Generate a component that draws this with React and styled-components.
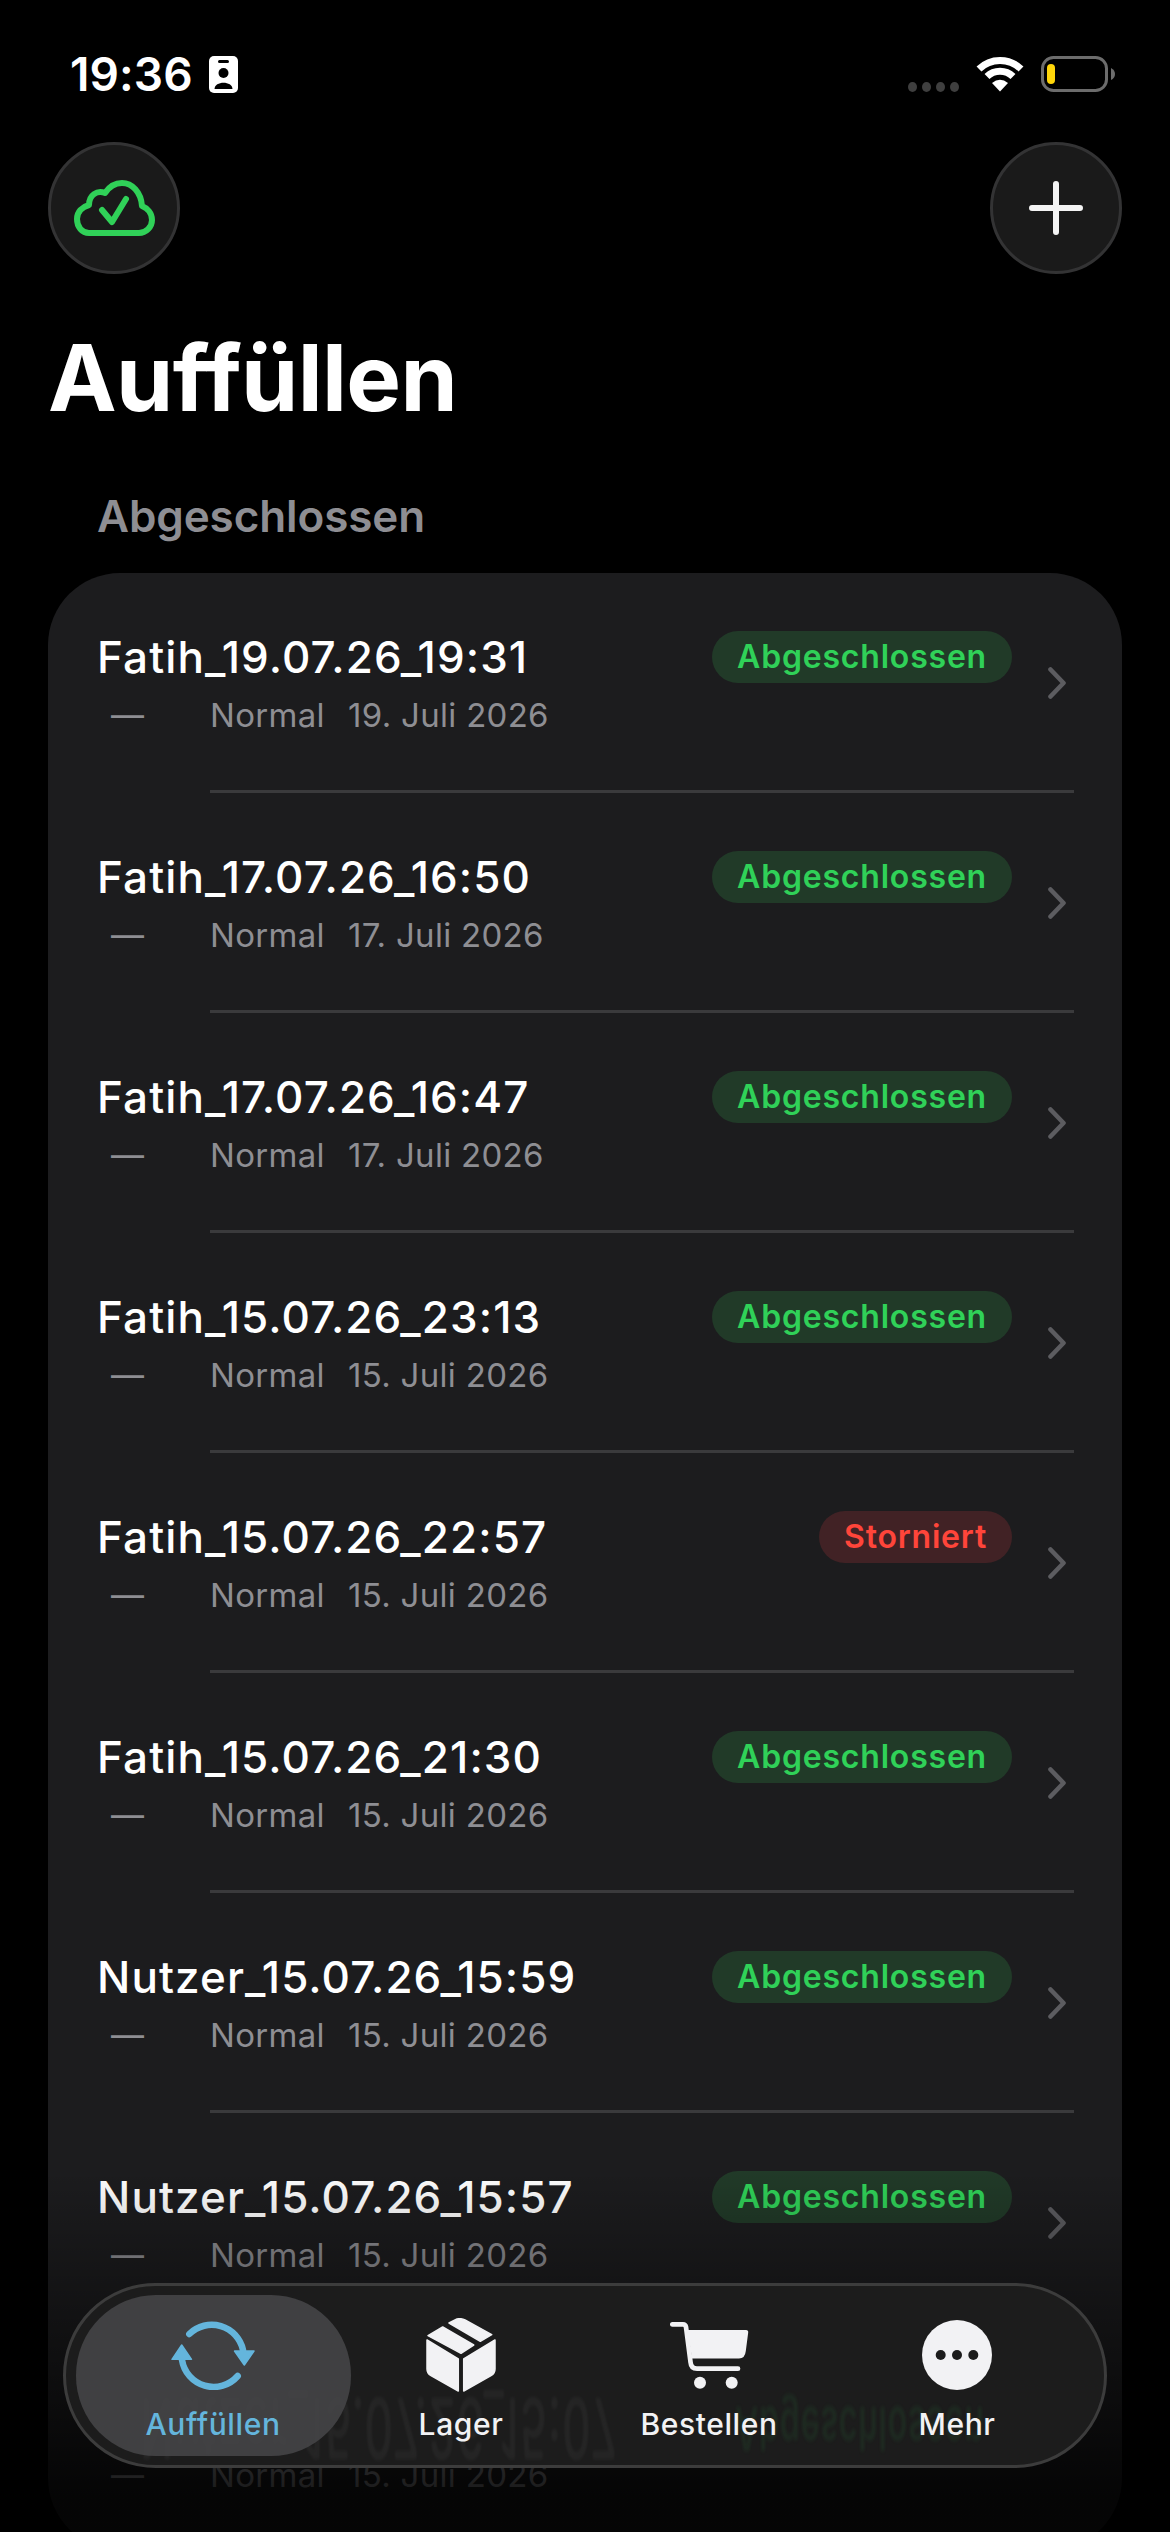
import React from "react";
import styled, { createGlobalStyle } from "styled-components";

const Global = createGlobalStyle`
  html, body { margin: 0; padding: 0; background: #000; }
  * { box-sizing: border-box; }
`;

const Screen = styled.div`
  position: relative;
  width: 1170px;
  height: 2532px;
  overflow: hidden;
  background: #000;
  color: #fff;
  font-family: Inter, "Noto Sans", sans-serif;
`;

const StatusBar = styled.header`
  display: flex;
  justify-content: space-between;
  align-items: flex-start;
  height: 142px;
  padding: 0 54px 0 70px;
`;
const StatusLeft = styled.div`
  display: flex;
  align-items: flex-start;
  gap: 16px;
  padding-top: 51px;
`;
const Time = styled.span`
  font-size: 46px;
  line-height: 46px;
  font-weight: 600;
  letter-spacing: 0.1px;
`;
const IdIcon = styled.svg`
  margin-top: 5px;
`;
const StatusRight = styled.div`
  display: flex;
  align-items: flex-start;
  gap: 17px;
  padding-top: 56px;
`;
const Dots = styled.div`
  display: flex;
  gap: 5px;
  margin-top: 26px;
`;
const Dot = styled.i`
  width: 9px;
  height: 10px;
  border-radius: 50%;
  background: #3f3f3f;
`;

const TopBar = styled.div`
  display: flex;
  justify-content: space-between;
  padding: 0 48px;
`;
const RoundButton = styled.button`
  display: flex;
  align-items: center;
  justify-content: center;
  width: 132px;
  height: 132px;
  padding: 0;
  border-radius: 50%;
  border: 3px solid #333334;
  background: #1a1a1a;
`;

const PageTitle = styled.h1`
  margin: 54px 0 0 48px;
  font-size: 92px;
  line-height: 100px;
  font-weight: 700;
  letter-spacing: -0.6px;
`;
const SectionLabel = styled.h2`
  margin: 62px 0 31px 97px;
  font-size: 44px;
  line-height: 52px;
  font-weight: 600;
  letter-spacing: -0.1px;
  color: #8e8e93;
`;

const Card = styled.section`
  margin: 0 48px;
  border-radius: 72px;
  background: #1c1c1e;
`;
const Row = styled.div`
  display: flex;
  align-items: flex-start;
  padding: 58px 56px 55px 49px;
`;
const Main = styled.div`
  flex: 1;
  min-width: 0;
`;
const RowTitle = styled.div`
  font-size: 44px;
  line-height: 52px;
  font-weight: 500;
  letter-spacing: 1.1px;
`;
const SubLine = styled.div`
  display: flex;
  margin-top: 13px;
  font-size: 33px;
  line-height: 39px;
  letter-spacing: 0.3px;
  color: #8e8e93;
`;
const DashSlot = styled.span`
  width: 113px;
  padding-left: 14px;
`;
const Priority = styled.span`
  width: 138px;
`;
const Badge = styled.span`
  padding: 0 25px;
  height: 52px;
  border-radius: 26px;
  font-size: 32px;
  line-height: 52px;
  font-weight: 600;
  letter-spacing: 0.8px;
  color: ${p => (p.$cancelled ? "#ff453a" : "#30d158")};
  background: ${p => (p.$cancelled ? "#412225" : "#213a28")};
`;
const Chevron = styled.svg`
  align-self: center;
  margin-left: 36px;
`;
const Divider = styled.div`
  height: 3px;
  margin: 0 48px 0 162px;
  background: #3a3a3c;
`;

const Fade = styled.div`
  position: absolute;
  left: 0;
  right: 0;
  top: 2170px;
  bottom: 0;
  pointer-events: none;
  background: linear-gradient(to bottom, rgba(0,0,0,0), rgba(0,0,0,0.82) 90%, rgba(0,0,0,0.82));
`;

const TabBar = styled.nav`
  position: absolute;
  left: 63px;
  bottom: 64px;
  display: flex;
  width: 1044px;
  height: 185px;
  padding: 9px 23px;
  overflow: hidden;
  border-radius: 93px;
  border: 3px solid #3c3c3c;
  background: #1c1c1c;
`;
const Mirror = styled.span`
  position: absolute;
  top: 127px;
  left: ${p => p.$left}px;
  font-size: ${p => p.$size}px;
  line-height: 30px;
  font-weight: ${p => p.$weight};
  letter-spacing: ${p => p.$spacing}px;
  white-space: nowrap;
  color: ${p => p.$color};
  transform: scaleY(-1.9);
  filter: blur(1px);
`;
const Tab = styled.a`
  position: relative;
  flex: 0 0 248px;
  display: flex;
  flex-direction: column;
  align-items: center;
  height: 161px;
  padding-top: 23px;
  color: ${p => (p.$active ? "#64b5dc" : "#f2f2f4")};
  &::before {
    content: "";
    display: ${p => (p.$active ? "block" : "none")};
    position: absolute;
    top: 0;
    bottom: 0;
    left: -13px;
    right: -14px;
    border-radius: 80px;
    background: rgba(72, 72, 74, 0.82);
  }
`;
const TabIcon = styled.svg`
  position: relative;
  display: block;
`;
const TabIconSlot = styled.div`
  display: flex;
  align-items: center;
  justify-content: center;
  height: 74px;
`;
const TabLabel = styled.span`
  position: relative;
  margin-top: 14px;
  font-size: 30px;
  line-height: 36px;
  font-weight: 500;
  letter-spacing: 0.6px;
`;

const rows = [
  ["Fatih_19.07.26_19:31", "19. Juli 2026", false],
  ["Fatih_17.07.26_16:50", "17. Juli 2026", false],
  ["Fatih_17.07.26_16:47", "17. Juli 2026", false],
  ["Fatih_15.07.26_23:13", "15. Juli 2026", false],
  ["Fatih_15.07.26_22:57", "15. Juli 2026", true],
  ["Fatih_15.07.26_21:30", "15. Juli 2026", false],
  ["Nutzer_15.07.26_15:59", "15. Juli 2026", false],
  ["Nutzer_15.07.26_15:57", "15. Juli 2026", false],
  ["Nutzer_15.07.26_15:07", "15. Juli 2026", false],
];

const ChevronIcon = () => (
  <Chevron width="18" height="32" viewBox="0 0 18 32" fill="none">
    <path d="M2.5 2.5 L15.5 16 L2.5 29.5" stroke="#5c5c60" strokeWidth="4.6" strokeLinecap="round" strokeLinejoin="round" />
  </Chevron>
);

export default function App() {
  return (
    <Screen>
      <Global />
      <StatusBar>
        <StatusLeft>
          <Time>19:36</Time>
          <IdIcon width="29" height="37" viewBox="0 0 29 37">
            <rect width="29" height="37" rx="5" fill="#fff" />
            <rect x="9" y="4" width="11" height="3" rx="1.5" fill="#000" />
            <circle cx="14.5" cy="17" r="5" fill="#000" />
            <path d="M5.5 33 C5.5 24.5 23.5 24.5 23.5 33 Z" fill="#000" />
          </IdIcon>
        </StatusLeft>
        <StatusRight>
          <Dots><Dot /><Dot /><Dot /><Dot /></Dots>
          <svg width="48" height="36" viewBox="0 0 48 36" fill="none">
            <path d="M3 13 A30 30 0 0 1 45 13" stroke="#fff" strokeWidth="7" />
            <path d="M11 20.5 A18.5 18.5 0 0 1 37 20.5" stroke="#fff" strokeWidth="7" />
            <path d="M16 27 Q24 20.5 32 27 L24 35.5 Z" fill="#fff" />
          </svg>
          <svg width="75" height="36" viewBox="0 0 75 36" fill="none">
            <rect x="1.5" y="1.5" width="64" height="33" rx="11" stroke="#6c6c6c" strokeWidth="3" />
            <rect x="6" y="8" width="8" height="20" rx="4" fill="#ffd60a" />
            <path d="M70 12 Q74 14 74 18 Q74 22 70 24 Z" fill="#6c6c6c" />
          </svg>
        </StatusRight>
      </StatusBar>

      <TopBar>
        <RoundButton aria-label="Sync">
          <svg width="81" height="56" viewBox="0 0 81 56" fill="none" stroke="#30d158" strokeWidth="6" strokeLinecap="round" strokeLinejoin="round">
            <path d="M15 53 H65 C72 53 78 47 78 40 C78 33 73 28 68 26 C67 12 58 3 48 3 C41 3 35 7 31 13 C23 10 15 15 15 25 C8 27 3 32 3 39 C3 47 8 53 15 53 Z" />
            <path d="M28 30 L38 42 L52 19" />
          </svg>
        </RoundButton>
        <RoundButton aria-label="Neu">
          <svg width="54" height="54" viewBox="0 0 54 54" fill="none" stroke="#f4f4f4" strokeWidth="6" strokeLinecap="round">
            <path d="M27 3 V51 M3 27 H51" />
          </svg>
        </RoundButton>
      </TopBar>

      <PageTitle>Auffüllen</PageTitle>
      <SectionLabel>Abgeschlossen</SectionLabel>

      <Card>
        {rows.map(([title, date, cancelled], i) => (
          <React.Fragment key={title}>
            <Row>
              <Main>
                <RowTitle>{title}</RowTitle>
                <SubLine>
                  <DashSlot>—</DashSlot>
                  <Priority>Normal</Priority>
                  <span>{date}</span>
                </SubLine>
              </Main>
              <Badge $cancelled={cancelled}>{cancelled ? "Storniert" : "Abgeschlossen"}</Badge>
              <ChevronIcon />
            </Row>
            {i < rows.length - 1 && <Divider />}
          </React.Fragment>
        ))}
      </Card>

      <Fade />

      <TabBar>
        <Mirror $left={74} $size={44} $weight={500} $spacing={1.1} $color="rgba(255,255,255,0.045)">Nutzer_15.07.26_15:07</Mirror>
        <Mirror $left={669} $size={32} $weight={600} $spacing={0.8} $color="rgba(48,209,88,0.08)">Abgeschlossen</Mirror>
        <Tab $active>
          <TabIconSlot>
            <TabIcon width="84" height="70" viewBox="0 0 84 70" fill="none">
              <path d="M18.3 14 A32 32 0 0 1 72 30" stroke="currentColor" strokeWidth="6.5" strokeLinecap="round" />
              <path d="M63.5 31 H83 L73.3 45 Z" fill="currentColor" stroke="currentColor" strokeWidth="1.5" strokeLinejoin="round" />
              <path d="M66.7 56 A32 32 0 0 1 11 40" stroke="currentColor" strokeWidth="6.5" strokeLinecap="round" />
              <path d="M1 39.3 H20.5 L10.7 25 Z" fill="currentColor" stroke="currentColor" strokeWidth="1.5" strokeLinejoin="round" />
            </TabIcon>
          </TabIconSlot>
          <TabLabel>Auffüllen</TabLabel>
        </Tab>
        <Tab>
          <TabIconSlot>
            <TabIcon width="70" height="74" viewBox="0 0 70 74" fill="currentColor" stroke="currentColor" strokeWidth="1.5" strokeLinejoin="round">
              <path d="M1 22 L32.3 41 V73 L5 57.7 Q1 55.5 1 51 Z" />
              <path d="M69 22 L37.7 41 V73 L65 57.7 Q69 55.5 69 51 Z" />
              <path d="M2 17.7 L16.7 9 L47.7 27 L35 35.3 Z" />
              <path d="M23 5 L31 1 Q35 0 39 2 L65.7 16.7 L54.3 23.3 Z" />
            </TabIcon>
          </TabIconSlot>
          <TabLabel>Lager</TabLabel>
        </Tab>
        <Tab>
          <TabIconSlot>
            <TabIcon width="79" height="68" viewBox="0 0 79 68" fill="none">
              <path d="M2.3 3.3 H13 Q15.5 3.3 16 6 L20.5 41 Q21 47.7 27 47.7 H68" stroke="currentColor" strokeWidth="4.7" strokeLinecap="round" strokeLinejoin="round" />
              <path d="M17.7 9 H76 Q78.5 9 78.2 11.5 L75.8 30 Q75 37.5 69 37.5 H22 Z" fill="currentColor" />
              <circle cx="30" cy="61.7" r="6" fill="currentColor" />
              <circle cx="61.7" cy="61.7" r="6" fill="currentColor" />
            </TabIcon>
          </TabIconSlot>
          <TabLabel>Bestellen</TabLabel>
        </Tab>
        <Tab>
          <TabIconSlot>
            <TabIcon width="70" height="70" viewBox="0 0 70 70">
              <circle cx="35" cy="35" r="35" fill="currentColor" />
              <circle cx="18.7" cy="35" r="5" fill="#1c1c1c" />
              <circle cx="35" cy="35" r="5" fill="#1c1c1c" />
              <circle cx="51.3" cy="35" r="5" fill="#1c1c1c" />
            </TabIcon>
          </TabIconSlot>
          <TabLabel>Mehr</TabLabel>
        </Tab>
      </TabBar>
    </Screen>
  );
}
